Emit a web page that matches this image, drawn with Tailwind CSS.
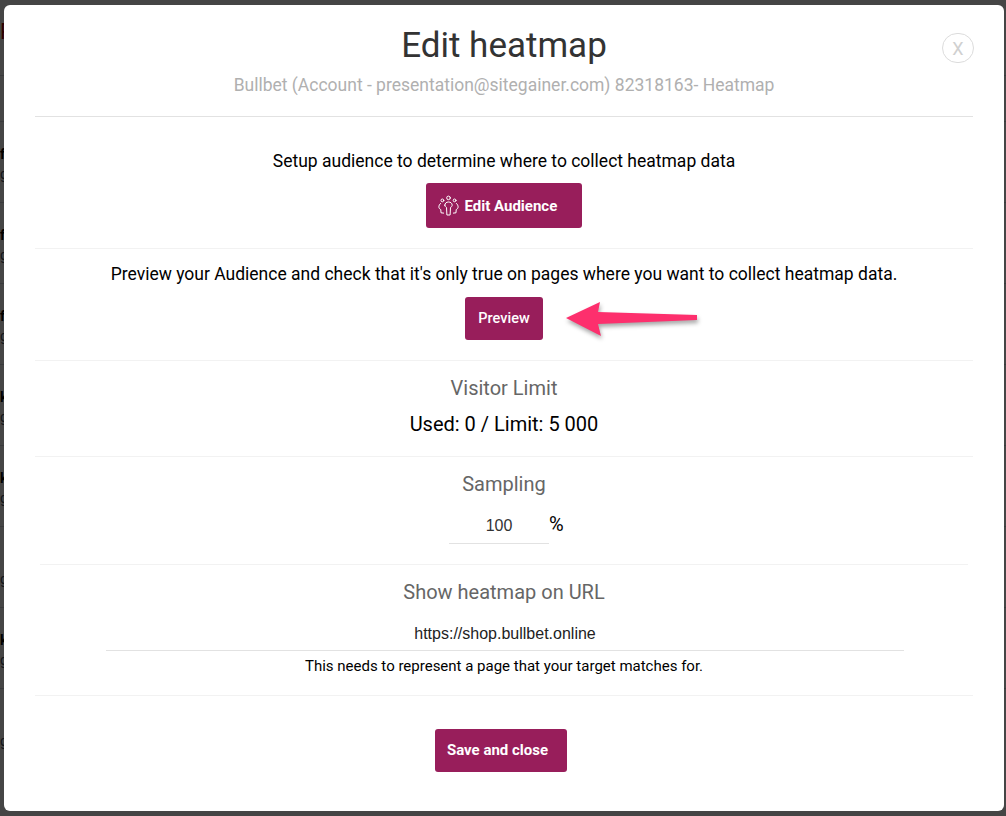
<!DOCTYPE html>
<html lang="en">

<head>
    <meta charset="UTF-8">
    <meta name="viewport" content="width=device-width, initial-scale=1.0">
    <title>Edit heatmap</title>
    <script src="https://cdn.jsdelivr.net/npm/@tailwindcss/browser@4"></script>
</head>

<body class="relative h-[816px] w-[1006px] overflow-hidden bg-white font-['Roboto',sans-serif] antialiased">
    <!-- page behind the modal, only a sliver of it shows on the left -->
    <div class="h-[816px] pt-[121px]">
        <div class="mt-[-98px] h-[53px] border-b border-gray-300 text-[22px] leading-[18px] text-[#a00]">P</div>
        <div class="h-[45px]"></div>
        <div class="h-[81px] border-t border-gray-300 pt-[22px] text-[14px] leading-[20px] font-bold text-black">f<div class="font-normal text-gray-600">g</div></div>
        <div class="h-[81px] border-t border-gray-300 pt-[22px] text-[14px] leading-[20px] font-bold text-black">f<div class="font-normal text-gray-600">g</div></div>
        <div class="h-[81px] border-t border-gray-300 pt-[22px] text-[14px] leading-[20px] font-bold text-black">f<div class="font-normal text-gray-600">g</div></div>
        <div class="h-[81px] border-t border-gray-300 pt-[22px] text-[14px] leading-[20px] font-bold text-black">k<div class="font-normal text-gray-600">g</div></div>
        <div class="h-[81px] border-t border-gray-300 pt-[22px] text-[14px] leading-[20px] font-bold text-black">k<div class="font-normal text-gray-600">g</div></div>
        <div class="h-[81px] border-t border-gray-300 pt-[22px] text-[14px] leading-[20px] font-bold text-black"><div class="mt-[20px] font-normal text-gray-600">g</div></div>
        <div class="h-[81px] border-t border-gray-300 pt-[22px] text-[14px] leading-[20px] font-bold text-black">k<div class="font-normal text-gray-600">g</div></div>
        <div class="h-[81px] border-t border-gray-300 pt-[22px] text-[14px] leading-[20px] font-bold text-black"><div class="mt-[20px] font-normal text-gray-600">g</div></div>
    </div>

    <!-- backdrop -->
    <div class="absolute inset-0 bg-black/[0.73]"></div>

    <!-- modal -->
    <div class="absolute top-[5px] left-[4px] h-[806px] w-[1000px] rounded-[6px] bg-white px-[31px] text-center">
        <button class="absolute top-[28px] right-[30px] flex h-[30px] w-[32px] items-center justify-center rounded-full border border-[#dcdcdc] text-[18px] text-[#d0d0d0]">X</button>

        <h1 class="pt-[18px] text-[35px] leading-[45px] text-[#333]">Edit heatmap</h1>
        <p class="mt-[5px] pb-[19px] text-[17.5px] leading-[24px] text-[#b0b0b0]">Bullbet (Account - presentation@sitegainer.com) 82318163- Heatmap</p>

        <section class="h-[132px] border-t border-[#e2e2e2] pt-[33px]">
            <p class="text-[17.5px] leading-[22px] text-black">Setup audience to determine where to collect heatmap data</p>
            <button class="mt-[11px] inline-flex h-[45px] w-[156px] items-center rounded-[3px] bg-[#981e5b] pl-[12px] text-[15px] font-bold text-white">
                <svg class="mr-[5.5px] h-[22px] w-[21px]" viewBox="0 0 21 22" fill="none" stroke="currentColor" stroke-width="1" stroke-linecap="round" stroke-linejoin="round">
                    <circle cx="10.5" cy="2.9" r="1.8" />
                    <circle cx="4.4" cy="5.4" r="1.4" />
                    <circle cx="16.6" cy="5.4" r="1.4" />
                    <path d="M6.8 10.2c0-2 1.6-3.2 3.7-3.2s3.7 1.2 3.7 3.2c0 1-.8 1.8-1.7 2.2l-.4 7.6H8.9l-.4-7.6c-.9-.4-1.7-1.2-1.7-2.2z" />
                    <path d="M2.6 8.4C1.4 9.4.8 10.8.9 12.2c.1 1.2 1 2 1.9 2.4l.2 3.2 2.6.3" />
                    <path d="M18.4 8.4c1.2 1 1.8 2.4 1.7 3.8-.1 1.2-1 2-1.9 2.4l-.2 3.2-2.6.3" />
                </svg>
                <span class="pt-[1px]">Edit Audience</span>
            </button>
        </section>

        <section class="h-[112px] border-t border-[#f2f2f2] pt-[14px]">
            <p class="text-[17.5px] leading-[22px] text-black">Preview your Audience and check that it's only true on pages where you want to collect heatmap data.</p>
            <button class="mt-[12px] h-[43px] w-[78px] rounded-[3px] bg-[#981e5b] text-[14.5px] font-medium text-white">Preview</button>
        </section>

        <section class="h-[96px] border-t border-[#f2f2f2] pt-[15px]">
            <h2 class="text-[20px] leading-[25px] text-[#666]">Visitor Limit</h2>
            <p class="mt-[11px] text-[20px] leading-[25px] text-black">Used: 0 / Limit: 5 000</p>
        </section>

        <section class="h-[108px] border-t border-[#f2f2f2] pt-[15px]">
            <h2 class="text-[20px] leading-[25px] text-[#666]">Sampling</h2>
            <div class="mt-[11px] flex justify-center pl-[4px]">
                <div class="h-[36px] w-[100px] border-b border-[#e2e2e2] pt-[8px] font-['Liberation_Sans',sans-serif] text-[16px] leading-[20px] text-[#333]">100</div>
                <span class="w-[14px] pt-[5px] text-[20px] leading-[22px] text-black">%</span>
            </div>
        </section>

        <section class="mx-[5px] h-[131px] border-t border-[#f2f2f2] pt-[15px]">
            <h2 class="text-[20px] leading-[25px] text-[#666]">Show heatmap on URL</h2>
            <div class="mr-[64px] ml-[66px] mt-[19px] h-[27px] border-b border-[#e2e2e2] font-['Liberation_Sans',sans-serif] text-[16px] leading-[20px] text-[#222]">https://shop.bullbet.online</div>
            <p class="mt-[5px] text-[15px] leading-[20px] text-black">This needs to represent a page that your target matches for.</p>
        </section>

        <section class="border-t border-[#f2f2f2] pt-[33px]">
            <button class="ml-[-6px] h-[43px] w-[132px] rounded-[3px] bg-[#981e5b] pr-[7px] text-[15px] font-bold text-white">Save and close</button>
        </section>
    </div>

    <!-- annotation arrow on top of the screenshot -->
    <svg class="absolute top-[295px] left-[560px] h-[50px] w-[145px] drop-shadow-[1px_3px_2px_rgba(0,0,0,0.35)]" viewBox="0 0 145 50">
        <path d="M6 23L40 7L38 17L137 20L137 25L38 29L41 41Z" fill="#fd2f6d" />
    </svg>
</body>

</html>
